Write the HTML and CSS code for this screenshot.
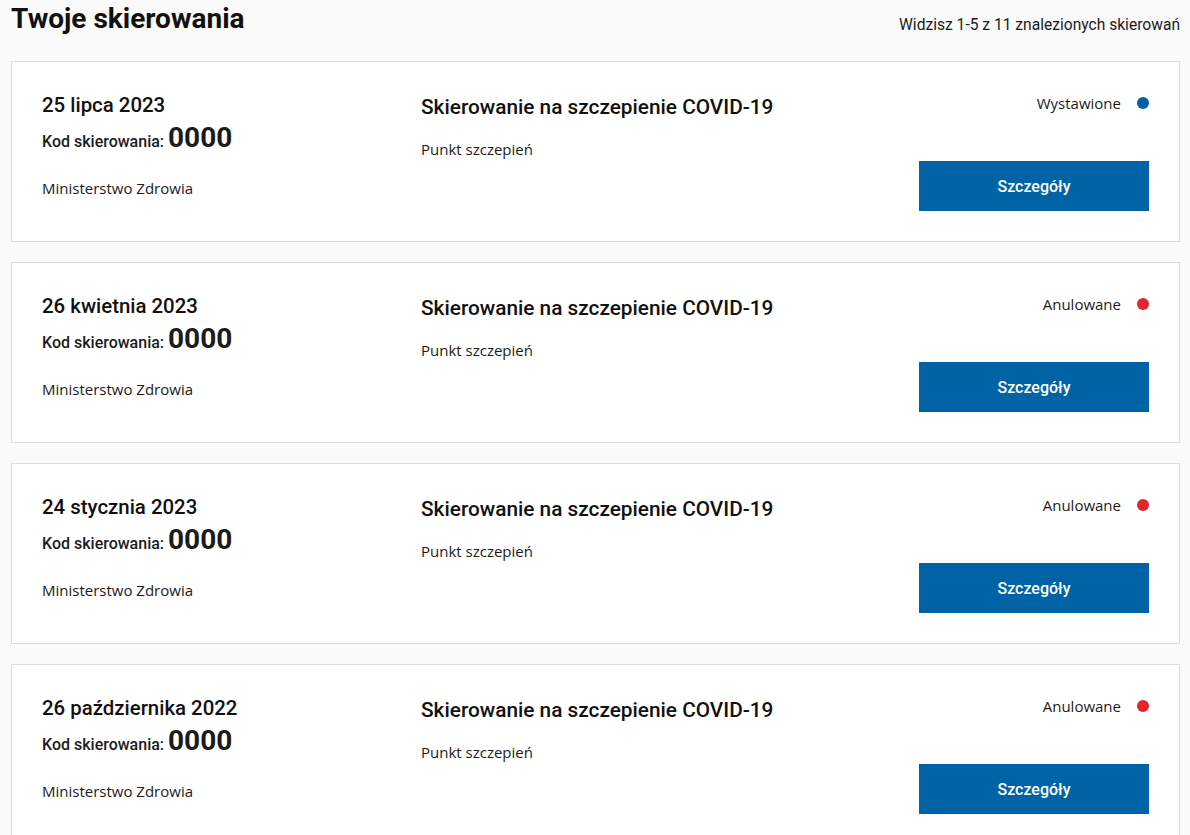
FILE: index.html
```html
<!DOCTYPE html>
<html lang="pl">
<head>
    <meta charset="UTF-8">
    <meta name="viewport" content="width=device-width, initial-scale=1.0">
    <title>Twoje skierowania</title>
    <link rel="stylesheet" href="styles.css">
</head>
<body>
    <div class="page">
        <div class="top-bar">
            <h1>Twoje skierowania</h1>
            <p class="count">Widzisz 1-5 z 11 znalezionych skierowań</p>
        </div>

        <div class="list">
            <div class="card">
                <div class="col-left">
                    <h2 class="date">25 lipca 2023</h2>
                    <p class="code">Kod skierowania: <span>0000</span></p>
                    <p class="issuer">Ministerstwo Zdrowia</p>
                </div>
                <div class="col-mid">
                    <h3 class="title">Skierowanie na szczepienie COVID-19</h3>
                    <p class="place">Punkt szczepień</p>
                </div>
                <div class="col-right">
                    <p class="status">Wystawione <span class="dot dot-blue"></span></p>
                    <button class="btn">Szczegóły</button>
                </div>
            </div>

            <div class="card">
                <div class="col-left">
                    <h2 class="date">26 kwietnia 2023</h2>
                    <p class="code">Kod skierowania: <span>0000</span></p>
                    <p class="issuer">Ministerstwo Zdrowia</p>
                </div>
                <div class="col-mid">
                    <h3 class="title">Skierowanie na szczepienie COVID-19</h3>
                    <p class="place">Punkt szczepień</p>
                </div>
                <div class="col-right">
                    <p class="status">Anulowane <span class="dot dot-red"></span></p>
                    <button class="btn">Szczegóły</button>
                </div>
            </div>

            <div class="card">
                <div class="col-left">
                    <h2 class="date">24 stycznia 2023</h2>
                    <p class="code">Kod skierowania: <span>0000</span></p>
                    <p class="issuer">Ministerstwo Zdrowia</p>
                </div>
                <div class="col-mid">
                    <h3 class="title">Skierowanie na szczepienie COVID-19</h3>
                    <p class="place">Punkt szczepień</p>
                </div>
                <div class="col-right">
                    <p class="status">Anulowane <span class="dot dot-red"></span></p>
                    <button class="btn">Szczegóły</button>
                </div>
            </div>

            <div class="card">
                <div class="col-left">
                    <h2 class="date">26 października 2022</h2>
                    <p class="code">Kod skierowania: <span>0000</span></p>
                    <p class="issuer">Ministerstwo Zdrowia</p>
                </div>
                <div class="col-mid">
                    <h3 class="title">Skierowanie na szczepienie COVID-19</h3>
                    <p class="place">Punkt szczepień</p>
                </div>
                <div class="col-right">
                    <p class="status">Anulowane <span class="dot dot-red"></span></p>
                    <button class="btn">Szczegóły</button>
                </div>
            </div>

            <div class="card">
                <div class="col-left">
                    <h2 class="date">12 lipca 2022</h2>
                    <p class="code">Kod skierowania: <span>0000</span></p>
                    <p class="issuer">Ministerstwo Zdrowia</p>
                </div>
                <div class="col-mid">
                    <h3 class="title">Skierowanie na szczepienie COVID-19</h3>
                    <p class="place">Punkt szczepień</p>
                </div>
                <div class="col-right">
                    <p class="status">Anulowane <span class="dot dot-red"></span></p>
                    <button class="btn">Szczegóły</button>
                </div>
            </div>
        </div>
    </div>
</body>
</html>
```

FILE: styles.css
```css
* {
    margin: 0;
    padding: 0;
    box-sizing: border-box;
}

body {
    font-family: "Open Sans", sans-serif;
    background: #fafafa;
    color: #1b1b1b;
}

.page {
    padding: 0 10px 0 11px;
}

.top-bar {
    display: flex;
    justify-content: space-between;
    align-items: flex-start;
    height: 61px;
}

.top-bar h1 {
    font-family: Roboto, sans-serif;
    font-size: 28px;
    font-weight: 700;
    color: #111;
    margin-top: 2px;
}

.count {
    font-family: Roboto, sans-serif;
    font-size: 15.6px;
    margin-top: 16px;
}

.list {
    display: flex;
    flex-direction: column;
    gap: 20px;
}

.card {
    display: grid;
    grid-template-columns: 379px 1fr 230px;
    background: white;
    border: 1px solid #dcdcdc;
    padding: 31px 30px 30px 30px;
    height: 181px;
}

.date {
    font-family: Roboto, sans-serif;
    font-size: 20.4px;
    font-weight: 500;
    color: #111;
}

.code {
    font-family: Roboto, sans-serif;
    font-size: 16px;
    font-weight: 500;
    margin-top: 4px;
}

.code span {
    font-size: 28px;
    font-weight: 700;
}

.issuer {
    font-size: 15px;
    margin-top: 24px;
}

.title {
    font-family: Roboto, sans-serif;
    font-size: 20.8px;
    font-weight: 500;
    color: #111;
    margin-top: 2px;
}

.place {
    font-size: 15px;
    margin-top: 20px;
}

.col-right {
    display: flex;
    flex-direction: column;
    align-items: flex-end;
}

.status {
    font-size: 15px;
    display: flex;
    align-items: center;
    gap: 16px;
    margin-top: 0;
}

.dot {
    width: 12px;
    height: 12px;
    border-radius: 50%;
    display: inline-block;
}

.dot-blue {
    background: #0061a8;
}

.dot-red {
    background: #e3242b;
}

.btn {
    margin-top: 48px;
    width: 230px;
    height: 50px;
    background: #0063a6;
    color: white;
    border: none;
    font-family: Roboto, sans-serif;
    font-size: 16px;
    font-weight: 500;
    cursor: pointer;
}
```
